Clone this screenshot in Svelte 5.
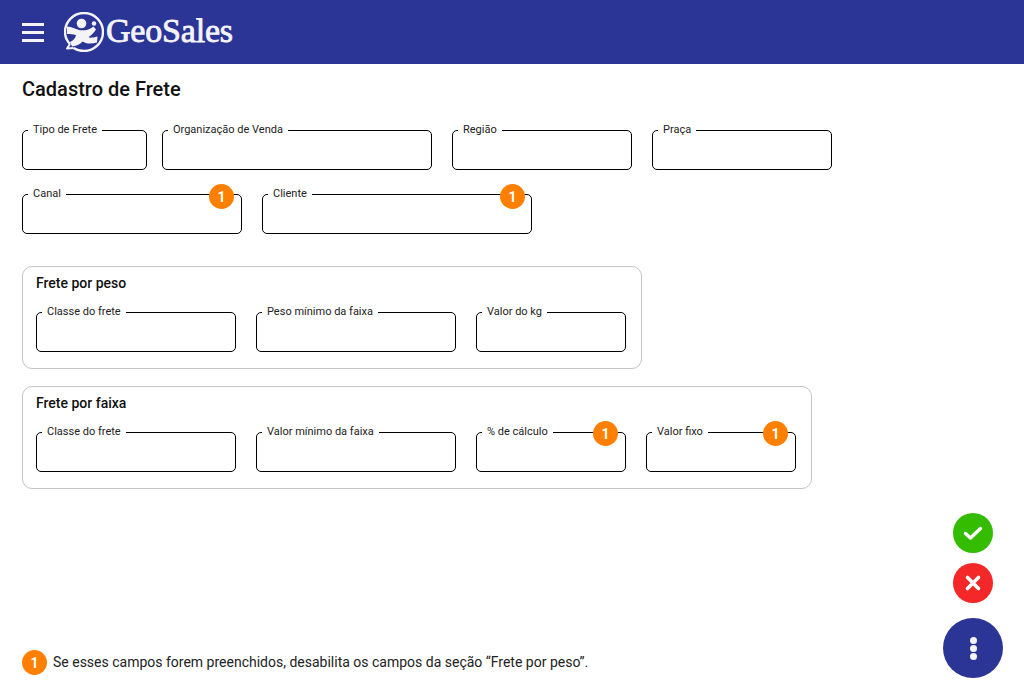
<script>
  const topRows = [
    [
      { label: 'Tipo de Frete', width: 125 },
      { label: 'Organização de Venda', width: 270 },
      { label: 'Região', width: 180 },
      { label: 'Praça', width: 180 }
    ],
    [
      { label: 'Canal', width: 220, badge: true },
      { label: 'Cliente', width: 270, badge: true }
    ]
  ];

  const groups = [
    {
      title: 'Frete por peso',
      width: 620,
      fields: [
        { label: 'Classe do frete', width: 200 },
        { label: 'Peso mínimo da faixa', width: 200 },
        { label: 'Valor do kg', width: 150 }
      ]
    },
    {
      title: 'Frete por faixa',
      width: 790,
      fields: [
        { label: 'Classe do frete', width: 200 },
        { label: 'Valor mínimo da faixa', width: 200 },
        { label: '% de cálculo', width: 150, badge: true },
        { label: 'Valor fixo', width: 150, badge: true }
      ]
    }
  ];
</script>

{#snippet field(f)}
  <div class="field" style:width="{f.width}px">
    <span class="field-label">{f.label}</span>
    {#if f.badge}<span class="badge over">1</span>{/if}
  </div>
{/snippet}

<div class="page">
  <header class="topbar">
    <button class="menu" aria-label="Menu">
      <span></span><span></span><span></span>
    </button>
    <div class="logo">
      <svg width="40" height="40" viewBox="0 0 40 40" aria-hidden="true">
        <path d="M6 32 C2.8 28.8 1 24.6 1 20 C1 9.5 9.5 1 20 1 C30.5 1 39 9.5 39 20 C39 30.5 30.5 39 20 39 C16 39 12.5 37.9 9.5 36" fill="none" stroke="#f4f4f8" stroke-width="2.4"/>
        <path d="M6 32 L3 36.5 L9.5 36" fill="none" stroke="#f4f4f8" stroke-width="2" stroke-linejoin="round"/>
        <circle cx="17.5" cy="11.5" r="4.8" fill="#f4f4f8"/>
        <circle cx="30" cy="11.5" r="2.2" fill="#f4f4f8"/>
        <path d="M3 14.5 C8 15 11 17 15 18 C20 19 25 18 29.5 14.5 L32 17.5 C29 22 26.5 24 24.5 25 C25.5 26 28 26 33.5 24.5 L33 30.5 C26.5 32.5 21.5 31.5 18.5 29.5 C16.5 32 13 34 8 34.5 L6 30 C9.5 28.5 11.5 26 12 23 C9 22 6.5 22 3 22 Z" fill="#f4f4f8"/>
      </svg>
      <span class="logo-text">GeoSales</span>
    </div>
  </header>

  <main class="content">
    <h1>Cadastro de Frete</h1>

    <div class="rows">
      {#each topRows as row}
        <div class="row">
          {#each row as f}
            {@render field(f)}
          {/each}
        </div>
      {/each}
    </div>

    <div class="groups">
      {#each groups as g}
        <section class="group" style:width="{g.width}px">
          <h2>{g.title}</h2>
          <div class="row">
            {#each g.fields as f}
              {@render field(f)}
            {/each}
          </div>
        </section>
      {/each}
    </div>
  </main>

  <footer class="note">
    <span class="badge">1</span>
    <span class="note-text">Se esses campos forem preenchidos, desabilita os campos da seção “Frete por peso”.</span>
  </footer>

  <div class="actions">
    <button class="fab ok" aria-label="Salvar">
      <svg width="20" height="20" viewBox="0 0 20 20"><path d="M2.5 10.5 L7.5 15 L17.5 5.5" fill="none" stroke="#fff" stroke-width="3.4" stroke-linecap="round" stroke-linejoin="round"/></svg>
    </button>
    <button class="fab cancel" aria-label="Cancelar">
      <svg width="20" height="20" viewBox="0 0 20 20"><path d="M4.5 4.5 L15.5 15.5 M15.5 4.5 L4.5 15.5" fill="none" stroke="#fff" stroke-width="3.6" stroke-linecap="round"/></svg>
    </button>
    <button class="fab more" aria-label="Mais opções">
      <span></span><span></span><span></span>
    </button>
  </div>
</div>

<style>
  :global(body) {
    margin: 0;
    background: #fff;
    font-family: Roboto, "Liberation Sans", sans-serif;
    color: #111;
  }

  .page {
    position: relative;
    display: flex;
    flex-direction: column;
    min-height: 698px;
    overflow: hidden;
  }

  .topbar {
    display: flex;
    align-items: center;
    height: 64px;
    padding-left: 22px;
    background: #2b3595;
    flex-shrink: 0;
  }

  .menu {
    display: flex;
    flex-direction: column;
    gap: 5px;
    width: 22px;
    padding: 0;
    border: 0;
    background: none;
  }

  .menu span {
    display: block;
    height: 3px;
    background: #f4f4f8;
  }

  .logo {
    display: flex;
    align-items: center;
    gap: 2px;
    margin-left: 20px;
  }

  .logo-text {
    margin-top: -2px;
    font-family: "Liberation Serif", serif;
    font-weight: 400;
    font-size: 34px;
    letter-spacing: -0.2px;
    -webkit-text-stroke: 0.8px #f4f4f8;
    color: #f4f4f8;
  }

  .content {
    padding: 0 22px;
  }

  h1 {
    margin: 13px 0 0;
    font-size: 20px;
    line-height: 24px;
    font-weight: 500;
  }

  .rows {
    display: flex;
    flex-direction: column;
    gap: 24px;
    margin-top: 29px;
  }

  .row {
    display: flex;
    gap: 20px;
  }

  .rows .row:first-child .field:first-child {
    margin-right: -5px;
  }

  .field {
    position: relative;
    box-sizing: border-box;
    height: 40px;
    border: 1px solid #000;
    border-radius: 5px;
    flex-shrink: 0;
  }

  .field-label {
    position: absolute;
    top: -8px;
    left: 5px;
    padding: 0 5px;
    background: #fff;
    font-size: 11px;
    line-height: 14px;
    white-space: nowrap;
    color: #222;
  }

  .badge {
    display: flex;
    align-items: center;
    justify-content: center;
    box-sizing: border-box;
    width: 25px;
    height: 25px;
    border-radius: 50%;
    background: #ff7f00;
    color: #fff;
    font-size: 14px;
    font-weight: 700;
    flex-shrink: 0;
  }

  .badge.over {
    position: absolute;
    top: -11px;
    right: 7px;
  }

  .rows .field + .field .badge.over {
    right: 6px;
  }

  .group .badge.over {
    top: -12px;
  }

  .groups {
    display: flex;
    flex-direction: column;
    gap: 17px;
    margin-top: 32px;
  }

  .group {
    box-sizing: border-box;
    height: 103px;
    padding: 8px 15px 0 13px;
    border: 1px solid #c4c4c4;
    border-radius: 10px;
  }

  h2 {
    margin: 0 0 21px;
    font-size: 14px;
    line-height: 16px;
    font-weight: 500;
  }

  .note {
    display: flex;
    align-items: center;
    gap: 6px;
    margin-top: auto;
    padding: 0 0 23px 22px;
    font-size: 14px;
    color: #222;
  }

  .note-text {
    margin-top: -1px;
  }

  .actions {
    position: absolute;
    right: 21px;
    bottom: 20px;
    display: flex;
    flex-direction: column;
    align-items: center;
    gap: 10px;
  }

  .fab {
    display: flex;
    align-items: center;
    justify-content: center;
    width: 40px;
    height: 40px;
    padding: 0;
    border: 0;
    border-radius: 50%;
  }

  .ok {
    background: #34bc00;
  }

  .cancel {
    background: #f42829;
  }

  .more {
    flex-direction: column;
    gap: 1px;
    width: 60px;
    height: 60px;
    margin-top: 5px;
    background: #2b3595;
  }

  .more span {
    width: 7px;
    height: 7px;
    border-radius: 50%;
    background: #f4f4f8;
  }
</style>
